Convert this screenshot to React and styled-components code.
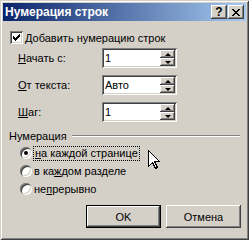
import React from 'react';
import styled, { createGlobalStyle } from 'styled-components';

const GlobalStyle = createGlobalStyle`
  html, body { margin: 0; padding: 0; background: #d4d0c8; }
  body {
    font-family: "Liberation Sans", Arial, sans-serif;
    font-size: 11px;
    color: #000;
  }
`;

const raised = `
  box-shadow: inset -1px -1px #404040, inset 1px 1px #ffffff,
    inset -2px -2px #808080, inset 2px 2px #d4d0c8;
`;

const sunken = `
  box-shadow: inset 1px 1px #808080, inset -1px -1px #ffffff,
    inset 2px 2px #404040, inset -2px -2px #d4d0c8;
`;

export default function App() {
    return (
        <>
            <GlobalStyle />
            <Window>
                <TitleBar>
                    <Title>Нумерация строк</Title>
                    <CapButtons>
                        <CapButton>?</CapButton>
                        <CapButton>
                            <svg width="8" height="7" viewBox="0 0 8 7" shapeRendering="crispEdges">
                                <path d="M0 0h2v1h-2zM6 0h2v1h-2zM1 1h2v1h-2zM5 1h2v1h-2zM2 2h4v1h-4zM3 3h2v1h-2zM2 4h4v1h-4zM1 5h2v1h-2zM5 5h2v1h-2zM0 6h2v1h-2zM6 6h2v1h-2z" fill="#000" />
                            </svg>
                        </CapButton>
                    </CapButtons>
                </TitleBar>
                <Body>
                    <CheckRow>
                        <CheckBox>
                            <svg width="7" height="7" viewBox="0 0 7 7" shapeRendering="crispEdges">
                                <path d="M6 0h1v3h-1zM5 1h1v3h-1zM4 2h1v3h-1zM3 3h1v3h-1zM2 4h1v3h-1zM1 3h1v3h-1zM0 2h1v3h-1z" fill="#000" />
                            </svg>
                        </CheckBox>
                        <span><U>Д</U>обавить нумерацию строк</span>
                    </CheckRow>
                    <Fields>
                        <FieldRow>
                            <Label><U>Н</U>ачать с:</Label>
                            <SpinBox value="1" />
                        </FieldRow>
                        <FieldRow>
                            <Label><U>О</U>т текста:</Label>
                            <SpinBox value="Авто" />
                        </FieldRow>
                        <FieldRow>
                            <Label><U>Ш</U>аг:</Label>
                            <SpinBox value="1" />
                        </FieldRow>
                    </Fields>
                    <GroupHeader>
                        <span>Нумерация</span>
                        <Etched />
                    </GroupHeader>
                    <Radios>
                        <RadioRow>
                            <Radio $checked />
                            <Focus><U>н</U>а каждой странице</Focus>
                        </RadioRow>
                        <RadioRow>
                            <Radio />
                            <span>в ка<U>ж</U>дом разделе</span>
                        </RadioRow>
                        <RadioRow>
                            <Radio />
                            <span>не<U>п</U>рерывно</span>
                        </RadioRow>
                    </Radios>
                    <Buttons>
                        <Button $default>OK</Button>
                        <Button>Отмена</Button>
                    </Buttons>
                </Body>
                <Cursor width="12" height="19" viewBox="0 0 12 19" shapeRendering="crispEdges">
                    <path d="M0.5 0.5 V16.5 L4.5 12.5 L7.5 18.5 L9.5 17.5 L6.5 11.5 H11.5 Z" fill="#fff" stroke="#000" strokeWidth="1" />
                </Cursor>
            </Window>
        </>
    );
}

function SpinBox({ value }) {
    return (
        <Spin>
            <SpinText>{value}</SpinText>
            <SpinButtons>
                <SpinButton><Arrow $up /></SpinButton>
                <SpinButton><Arrow /></SpinButton>
            </SpinButtons>
        </Spin>
    );
}

const Window = styled.div`
    position: relative;
    box-sizing: border-box;
    width: 249px;
    height: 240px;
    padding: 3px;
    background: #d4d0c8;
    box-shadow: inset 1px 1px #d4d0c8, inset -1px -1px #404040,
        inset 2px 2px #ffffff, inset -2px -2px #808080;
    display: flex;
    flex-direction: column;
`;

const TitleBar = styled.div`
    height: 18px;
    display: flex;
    align-items: center;
    justify-content: space-between;
    background: linear-gradient(to right, #0a246a, #a6caf0);
    padding: 0 2px;
`;

const Title = styled.span`
    color: #fff;
    font-weight: bold;
    font-size: 12px;
`;

const CapButtons = styled.div`
    display: flex;
    gap: 1px;
`;

const CapButton = styled.div`
    width: 16px;
    height: 14px;
    background: #d4d0c8;
    ${raised}
    display: flex;
    align-items: center;
    justify-content: center;
    font-weight: bold;
    font-size: 12px;
    line-height: 14px;
`;

const Body = styled.div`
    flex: 1;
    display: flex;
    flex-direction: column;
    padding-left: 7px;
`;

const U = styled.span`
    text-decoration: underline;
`;

const CheckRow = styled.div`
    margin-top: 10px;
    height: 13px;
    display: flex;
    align-items: center;
    gap: 2px;
`;

const CheckBox = styled.div`
    width: 13px;
    height: 13px;
    background: #fff;
    ${sunken}
    display: flex;
    align-items: center;
    justify-content: center;
`;

const Fields = styled.div`
    margin-top: 4px;
    padding-left: 8px;
    display: flex;
    flex-direction: column;
    gap: 7px;
`;

const FieldRow = styled.div`
    display: flex;
    align-items: center;
    height: 20px;
`;

const Label = styled.span`
    width: 84px;
`;

const Spin = styled.div`
    box-sizing: border-box;
    width: 75px;
    height: 20px;
    padding: 2px;
    background: #fff;
    ${sunken}
    display: flex;
`;

const SpinText = styled.div`
    flex: 1;
    padding-left: 1px;
    line-height: 16px;
`;

const SpinButtons = styled.div`
    width: 15px;
    display: flex;
    flex-direction: column;
`;

const SpinButton = styled.div`
    flex: 1;
    background: #d4d0c8;
    ${raised}
    display: flex;
    align-items: center;
    justify-content: center;
`;

const Arrow = styled.div`
    width: 0;
    height: 0;
    border-left: 3px solid transparent;
    border-right: 3px solid transparent;
    ${p => (p.$up ? 'border-bottom: 3px solid #000;' : 'border-top: 3px solid #000;')}
`;

const GroupHeader = styled.div`
    margin: 8px 6px 0 -1px;
    height: 12px;
    display: flex;
    align-items: center;
    gap: 5px;
`;

const Etched = styled.div`
    flex: 1;
    height: 0;
    border-top: 1px solid #808080;
    border-bottom: 1px solid #ffffff;
`;

const Radios = styled.div`
    margin-top: 2px;
    padding-left: 10px;
    display: flex;
    flex-direction: column;
`;

const RadioRow = styled.div`
    height: 18px;
    display: flex;
    align-items: center;
    gap: 2px;
`;

const Radio = styled.div`
    width: 12px;
    height: 12px;
    border-radius: 50%;
    background: #fff;
    ${sunken}
    display: flex;
    align-items: center;
    justify-content: center;
    &::after {
        content: '';
        display: ${p => (p.$checked ? 'block' : 'none')};
        width: 4px;
        height: 4px;
        border-radius: 50%;
        background: #000;
    }
`;

const Focus = styled.span`
    outline: 1px dotted #000;
    padding: 0 1px;
    line-height: 13px;
`;

const Buttons = styled.div`
    margin-top: 7px;
    margin-right: 5px;
    display: flex;
    justify-content: flex-end;
    gap: 5px;
`;

const Button = styled.div`
    box-sizing: border-box;
    width: 75px;
    height: 23px;
    display: flex;
    align-items: center;
    justify-content: center;
    background: #d4d0c8;
    box-shadow: ${p =>
        p.$default
            ? 'inset 0 0 0 1px #000, inset -2px -2px #404040, inset 2px 2px #ffffff, inset -3px -3px #808080'
            : 'inset -1px -1px #404040, inset 1px 1px #ffffff, inset -2px -2px #808080'};
`;

const Cursor = styled.svg`
    position: absolute;
    left: 148px;
    top: 150px;
`;
